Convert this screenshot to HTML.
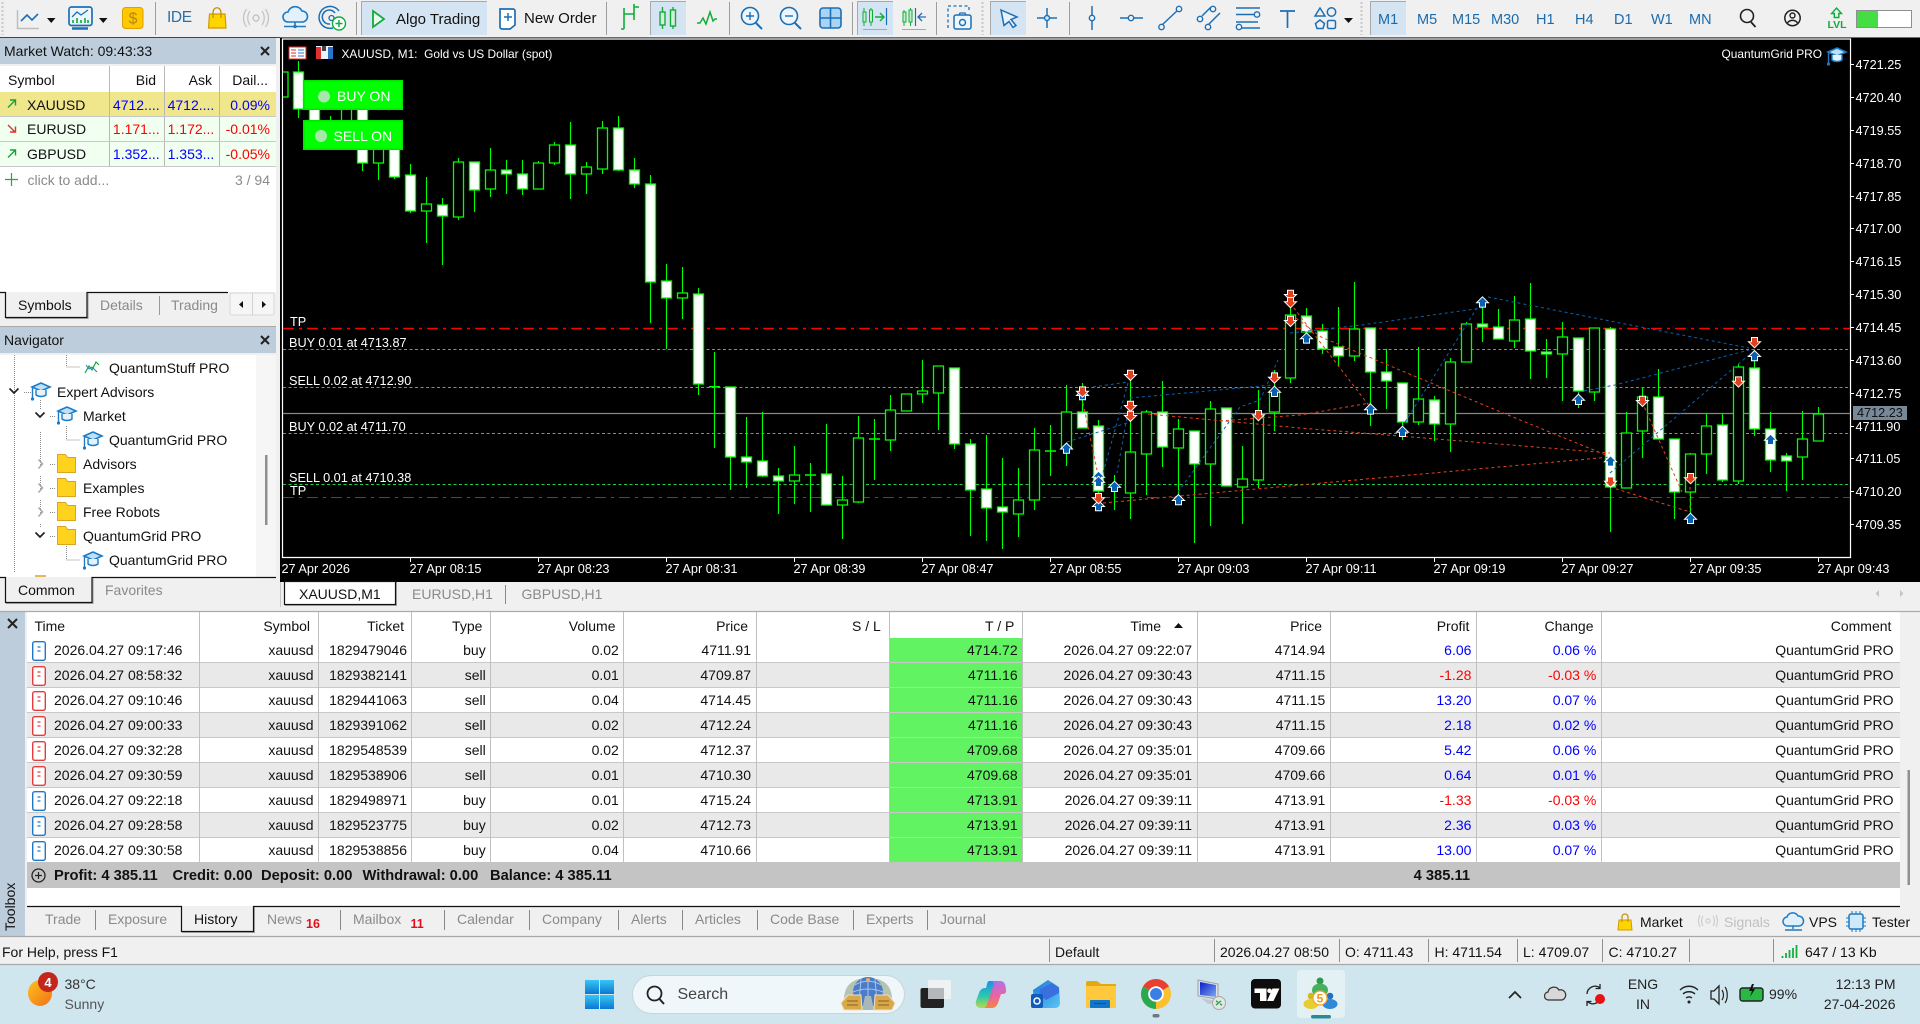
<!DOCTYPE html>
<html><head><meta charset="utf-8"><title>MetaTrader 5</title>
<style>
html,body{margin:0;padding:0;width:1920px;height:1024px;overflow:hidden;background:#f0f0f0}
body{position:relative;font-family:"Liberation Sans",sans-serif;font-size:14px;color:#111}
.b{position:absolute}
.t{position:absolute;height:20px;line-height:20px;white-space:nowrap}
.w{position:absolute;height:18px;line-height:18px;white-space:nowrap;font-size:12.7px;color:#fff}
.g{color:#8a8a8a}
.tb{font-size:15px}
.tf{color:#1a6bae;font-size:14.5px;top:10px}
.r{position:absolute;left:0;width:1920px;height:25px}
.r span{position:absolute;line-height:25px;height:25px;white-space:nowrap}
.c1{left:54px}.c2{right:1606.5px}.c3{right:1513px}.c4{right:1434.3px}.c5{right:1301.2px}.c6{right:1169px}.c7{right:902.4px}.c8{right:728px}.c9{right:594.7px}.c10{right:448.6px}.c11{right:323.7px}.c12{right:26.5px}
.bl{color:#0000ff}.rd{color:#ff0000}
.sm{font-weight:bold;font-size:14.7px;color:#111}
svg{position:absolute;left:0;top:0}
</style></head><body>
<!-- backgrounds -->
<div class="b" style="left:0;top:38px;width:276px;height:26px;background:#bdcddc"></div>
<div class="b" style="left:0;top:66px;width:276px;height:226px;background:#fff"></div>
<div class="b" style="left:0;top:92px;width:276px;height:24px;background:#f0e68c"></div>
<div class="b" style="left:0;top:117px;width:276px;height:49px;background:#f0fff0"></div>
<div class="b" style="left:0;top:327px;width:276px;height:26px;background:#bdcddc"></div>
<div class="b" style="left:0;top:355px;width:256px;height:222px;background:#fff"></div>
<div class="b" style="left:256px;top:355px;width:20px;height:222px;background:#f6f6f6"></div>
<div class="b" style="left:280px;top:38px;width:1640px;height:544px;background:#000"></div>
<div class="b" style="left:0;top:612px;width:25px;height:324px;background:#bdcddc"></div>
<div class="b" style="left:27px;top:612px;width:1873px;height:294px;background:#fff"></div>
<div class="b" style="left:0;top:965px;width:1920px;height:59px;background:#cfe6ee"></div>

<svg width="1920" height="1024" viewBox="0 0 1920 1024" fill="none">
<defs>
<polygon id="au" points="0,-5.5 6,0.5 3,0.5 3,4.8 -3,4.8 -3,0.5 -6,0.5" fill="#0860b0" stroke="#fff" stroke-width="1"/>
<polygon id="ad" points="0,5.5 6,-0.5 3,-0.5 3,-4.8 -3,-4.8 -3,-0.5 -6,-0.5" fill="#e04020" stroke="#fff" stroke-width="1"/>
<g id="hat"><path d="M1 6 10 2l9 4-9 4z" fill="#bfe0f7" stroke="#1c7cc8" stroke-width="1.6"/><path d="M5 9v5c3 2 7 2 10 0V9" stroke="#1c7cc8" stroke-width="1.4" fill="#e4f2fb"/><path d="M1.5 6.5V17" stroke="#1c7cc8" stroke-width="1.4"/><circle cx="1.5" cy="18" r="1.6" fill="#1c7cc8"/></g>
<path id="fld" d="M.5 3.5V.5h8l2 3h8v15H.5z" fill="#ffd21e" stroke="#d8a520"/>
<g id="ob"><rect x=".7" y=".7" width="12.6" height="18.6" rx="2" fill="#fff" stroke="#1e78c8" stroke-width="1.4"/><path d="M5.5 6h3M5.5 10h3" stroke="#1e78c8" stroke-width="1.2"/></g>
<g id="or"><rect x=".7" y=".7" width="12.6" height="18.6" rx="2" fill="#fff" stroke="#e63b3b" stroke-width="1.4"/><path d="M5.5 6h3M5.5 10h3" stroke="#e63b3b" stroke-width="1.2"/></g>
<linearGradient id="cl" x1="0" y1="0" x2="0" y2="1"><stop offset="0" stop-color="#1f8fe8"/><stop offset=".55" stop-color="#28c8b0"/><stop offset="1" stop-color="#b8d84a"/></linearGradient>
<linearGradient id="cr" x1="0" y1="0" x2="0" y2="1"><stop offset="0" stop-color="#b06ae8"/><stop offset=".55" stop-color="#ee5ca0"/><stop offset="1" stop-color="#f5803a"/></linearGradient>
<linearGradient id="og" x1="0" y1="0" x2="1" y2="1"><stop offset="0" stop-color="#1c78d8"/><stop offset="1" stop-color="#5cc4f4"/></linearGradient>
<linearGradient id="wg" x1="0" y1="0" x2="0" y2="1"><stop offset="0" stop-color="#38c6f4"/><stop offset="1" stop-color="#0a78d4"/></linearGradient>
<linearGradient id="sg" x1="0" y1="0" x2="1" y2="1"><stop offset="0" stop-color="#ffc21a"/><stop offset="1" stop-color="#f0701a"/></linearGradient>
<linearGradient id="ms" x1="0" y1="0" x2="1" y2="1"><stop offset="0" stop-color="#0a1ec8"/><stop offset="1" stop-color="#7fa8f0"/></linearGradient>
</defs>

<!-- Toolbar structure -->
<path d="M0 37.5H280" stroke="#9a9a9a"/>
<path d="M0 37.5H1920" stroke="#000" opacity=".55"/>
<path d="M155.5 2V35M356.5 2V35M606.5 2V35M729.5 2V35M852.5 2V35M936.5 2V35M1069.5 2V35" stroke="#9d9d9d"/>
<path d="M982.5 2V35M1361.5 2V35M2.5 2V35" stroke="#c8c8c8" stroke-dasharray="2 2" stroke-width="2"/>
<rect x="361" y="1" width="126" height="34" fill="#d5e4f2"/><path d="M361.5 35V1.5H487" stroke="#a8a8a8"/>
<rect x="650" y="1" width="36" height="34" fill="#d5e4f2"/><path d="M650.5 35V1.5H686" stroke="#a8a8a8"/>
<rect x="857" y="1" width="36" height="34" fill="#d5e4f2"/><path d="M857.5 35V1.5H893" stroke="#a8a8a8"/>
<rect x="990" y="1" width="36" height="34" fill="#d5e4f2"/><path d="M990.5 35V1.5H1026" stroke="#a8a8a8"/>
<rect x="1370" y="1" width="36" height="34" fill="#d5e4f2"/><path d="M1370.5 35V1.5H1406" stroke="#a8a8a8"/>

<!-- Toolbar icons -->
<path d="M17.5 10V28.500H39" stroke="#bdbdbd" stroke-width="1.5"/><path d="M21 21 27 15 32 20 38 14" stroke="#1d6fb5" stroke-width="1.6"/>
<path d="M47 18h8.500l-4.250 5zM99 18h8.500l-4.250 5z" fill="#111"/>
<rect x="69" y="7" width="23" height="18.500" rx="2.500" stroke="#1d6fb5" stroke-width="1.7" fill="#edf6fc"/><path d="M72 28.500h16" stroke="#1d6fb5" stroke-width="2.500"/><path d="M72 17 77 12 81 15 88 10" stroke="#1d6fb5" stroke-width="1.3"/><path d="M73 23v-3M77 23v-5M81 23v-3M85 23v-5M88 23v-3" stroke="#10a83a" stroke-width="1.600"/>
<rect x="122.500" y="7.500" width="20.500" height="21" rx="3" fill="#ffc800" stroke="#e0a000"/>
<text x="133" y="23.500" font-family="Liberation Sans" font-size="16" fill="#b8860b" text-anchor="middle">$</text>
<path d="M209.500 14h15.500l1 14h-17.500z" fill="#ffd500" stroke="#d09a00" stroke-width="1.200"/><path d="M213 18v-5c0-7 8-7 8 0v5" stroke="#c78f00" stroke-width="1.300"/>
<circle cx="256" cy="18" r="3" stroke="#c4c4c4" stroke-width="1.400"/><path d="M250 11c-3 4-3 10 0 14M262 11c3 4 3 10 0 14M246.500 9c-4 6-4 12 0 18M265.500 9c4 6 4 12 0 18" stroke="#c4c4c4" stroke-width="1.300"/>
<path d="M288 22a5 5 0 0 1 0-10 7.500 7.500 0 0 1 14-1 5.500 5.500 0 0 1 0 11z" fill="#e3f1fb" stroke="#1d7ac4" stroke-width="1.600"/><path d="M295 22v4M284 26.500h22" stroke="#1d7ac4" stroke-width="1.600"/><circle cx="295" cy="26.500" r="1.800" fill="#1d7ac4"/>
<path d="M339 11a11 11 0 1 0-6 17M335 13a7 7 0 1 0-5 11" stroke="#1d6fb5" stroke-width="1.500"/><circle cx="331.500" cy="18" r="2.500" stroke="#1d6fb5" stroke-width="1.300"/><circle cx="339" cy="23.500" r="6.500" fill="#fff" stroke="#0dae40" stroke-width="1.400"/><path d="M339 20v7M335.500 23.500h7" stroke="#0dae40" stroke-width="1.500"/>
<path d="M373 11v16l11-8z" stroke="#12ab3c" stroke-width="1.800" fill="#eafaef"/>
<path d="M500 9h13a2 2 0 0 1 2 2v14l-5 4h-8a2 2 0 0 1-2-2z" fill="#fff" stroke="#1d6fb5" stroke-width="1.700"/><path d="M508 13v8M504 17h8" stroke="#1d6fb5" stroke-width="1.500"/>
<path d="M624 8v21M621 29h3M624 14h5M634 4v16M634 7h5M634 14h-5" stroke="#11ad3a" stroke-width="1.600"/>
<path d="M662.500 7v22M673 7v22" stroke="#11ad3a" stroke-width="1.400"/><rect x="660" y="12" width="5" height="13" fill="#d5f0dc" stroke="#11ad3a" stroke-width="1.400"/><rect x="670.500" y="10" width="5" height="16" fill="#d5f0dc" stroke="#11ad3a" stroke-width="1.400"/>
<path d="M697 23h3l3-5 3 6 4-12 3 9 2-2h2" stroke="#11ad3a" stroke-width="1.500"/>
<circle cx="750" cy="16" r="8.500" stroke="#1d6fb5" stroke-width="1.600" fill="#edf6fc"/><path d="M756 23l6 6" stroke="#1d6fb5" stroke-width="2"/><path d="M750 12v8M746 16h8" stroke="#1d6fb5" stroke-width="1.400"/>
<circle cx="789" cy="16" r="8.500" stroke="#1d6fb5" stroke-width="1.600" fill="#edf6fc"/><path d="M795 23l6 6" stroke="#1d6fb5" stroke-width="2"/><path d="M785 16h8" stroke="#1d6fb5" stroke-width="1.400"/>
<rect x="820" y="8" width="21" height="20" rx="3" fill="#a9d4f5" stroke="#1d6fb5" stroke-width="1.600"/><path d="M830.500 8v20M820 18h21" stroke="#1d6fb5" stroke-width="1.600"/>
<path d="M864 8v18M871 8v18" stroke="#11ad3a"/><rect x="863" y="12" width="3" height="10" fill="#c3eecd" stroke="#11ad3a"/><rect x="869.500" y="10" width="3" height="12" fill="#c3eecd" stroke="#11ad3a"/><path d="M875 17h8M880 13l4 4-4 4" stroke="#11ad3a" stroke-width="1.400"/><path d="M886.500 8v17" stroke="#1d6fb5" stroke-width="1.200"/><path d="M863 29.500h24" stroke="#a8a8a8"/>
<path d="M904 10v16M910.500 8v18" stroke="#11ad3a"/><rect x="903" y="12" width="3" height="10" fill="#c3eecd" stroke="#11ad3a"/><rect x="909" y="10" width="3" height="12" fill="#c3eecd" stroke="#11ad3a"/><path d="M915.500 8v18" stroke="#1d6fb5" stroke-width="1.200"/><path d="M926 17h-8M922 13l-4 4 4 4" stroke="#1d6fb5" stroke-width="1.300"/><path d="M902 29.500h24" stroke="#a8a8a8"/>
<path d="M948 28v-22h21v6" stroke="#1d6fb5" stroke-dasharray="3 2.500" stroke-width="1.300"/><rect x="954" y="15" width="17" height="14" rx="2" fill="#edf6fc" stroke="#1d6fb5" stroke-width="1.500"/><circle cx="962.500" cy="22.500" r="3" stroke="#1d6fb5" stroke-width="1.400"/><path d="M959 15l1-2h5l1 2" stroke="#1d6fb5" stroke-width="1.300"/>
<path d="M1001 10l16 7-6 2.500 5 6-3 2-4-6-5 4z" fill="#e8f2fa" stroke="#1d6fb5" stroke-width="1.500"/>
<path d="M1047 8v20M1037 18h20" stroke="#1d6fb5" stroke-width="1.500"/><circle cx="1047" cy="18" r="2.500" fill="#d7e8f6" stroke="#1d6fb5" stroke-width="1.400"/>
<path d="M1092 6v24" stroke="#1d6fb5" stroke-width="1.500"/><circle cx="1092" cy="18" r="2.700" fill="#f0f0f0" stroke="#1d6fb5" stroke-width="1.400"/>
<path d="M1120 18h23" stroke="#1d6fb5" stroke-width="1.500"/><circle cx="1131" cy="18" r="2.700" fill="#f0f0f0" stroke="#1d6fb5" stroke-width="1.400"/>
<path d="M1162 25l17-16" stroke="#1d6fb5" stroke-width="1.500"/><circle cx="1161.500" cy="27" r="2.700" fill="#f0f0f0" stroke="#1d6fb5" stroke-width="1.400"/><circle cx="1179" cy="9" r="2.700" fill="#f0f0f0" stroke="#1d6fb5" stroke-width="1.400"/>
<path d="M1202 16l9-9M1208 25l12-12" stroke="#1d6fb5" stroke-width="1.500"/><circle cx="1200" cy="19" r="2.700" fill="#f0f0f0" stroke="#1d6fb5" stroke-width="1.400"/><circle cx="1213" cy="9" r="2.700" fill="#f0f0f0" stroke="#1d6fb5" stroke-width="1.400"/><circle cx="1208" cy="27" r="2.700" fill="#f0f0f0" stroke="#1d6fb5" stroke-width="1.400"/>
<path d="M1236 8h24M1236 14.500h18M1236 22h22M1240 28h20" stroke="#1d6fb5" stroke-width="1.500"/><circle cx="1257" cy="14.500" r="2.700" fill="#f0f0f0" stroke="#1d6fb5" stroke-width="1.400"/><circle cx="1239" cy="27" r="2.700" fill="#f0f0f0" stroke="#1d6fb5" stroke-width="1.400"/>
<path d="M1280 11h15M1287.500 11v17" stroke="#1d6fb5" stroke-width="1.700"/>
<path d="M1320 8l5 8h-10z" stroke="#1d6fb5" stroke-width="1.500"/><circle cx="1331.500" cy="12" r="4.200" stroke="#1d6fb5" stroke-width="1.500"/><path d="M1320 20l4.500 3.500-1.500 5h-6l-1.500-5z" stroke="#1d6fb5" stroke-width="1.500"/><rect x="1327.500" y="20.500" width="8" height="8" rx="1.500" stroke="#1d6fb5" stroke-width="1.500"/>
<path d="M1344 18h9l-4.500 5z" fill="#111"/>
<circle cx="1747" cy="16" r="6.500" stroke="#222" stroke-width="1.600"/><path d="M1751 22l4.500 5" stroke="#222" stroke-width="1.800"/>
<circle cx="1792.500" cy="18" r="7.700" stroke="#222" stroke-width="1.500"/><circle cx="1792.500" cy="15.500" r="2.500" stroke="#222" stroke-width="1.400"/><path d="M1787.500 23c2-3.500 8-3.500 10 0" stroke="#222" stroke-width="1.400"/>
<path d="M1836.500 8l5 5.500h-2.700v4h-4.500v-4h-2.700z" stroke="#11ad3a" stroke-width="1.400"/>
<text x="1837" y="28" font-family="Liberation Sans" font-size="10.500" font-weight="bold" fill="#11ad3a" text-anchor="middle">LVL</text>
<rect x="1856.500" y="10.500" width="55" height="17" fill="#fff" stroke="#8f8f8f"/><rect x="1857" y="11" width="21" height="16" fill="#44dd44"/>

<!-- Chart frame -->
<path d="M282 39H1850.500V557.500H282.500V39" stroke="#fff" stroke-width="1.200"/>
<path d="M1850 64.500h4M1850 97.500h4M1850 130.500h4M1850 163.500h4M1850 196.500h4M1850 228.500h4M1850 261.500h4M1850 294.500h4M1850 327.500h4M1850 360.500h4M1850 393.500h4M1850 426.500h4M1850 458.500h4M1850 491.500h4M1850 524.500h4" stroke="#fff"/>
<path d="M410.500 557v5M538.500 557v5M666.500 557v5M794.500 557v5M922.500 557v5M1050.500 557v5M1178.500 557v5M1306.500 557v5M1434.500 557v5M1562.500 557v5M1690.500 557v5M1818.500 557v5" stroke="#fff"/>

<!-- Horizontal levels -->
<path d="M283 413.500H1850" stroke="#868686" stroke-width="1.200"/>
<path d="M283 349.500H1850M283 387.500H1850M283 433.500H1850M283 484.500H1850" stroke="#22cc44" stroke-dasharray="3 2.500"/>
<path d="M283 328.500H1850" stroke="#f00" stroke-width="1.600" stroke-dasharray="11 5 3 5"/>
<path d="M283 497.500H1850" stroke="#f00" stroke-width="1.100" stroke-dasharray="11 5 3 5"/>

<!-- Wicks -->
<path stroke="#00ff00" stroke-width="1.100" d="M298.500 61V118M314.500 95V135M330.500 116V135M346.500 100V135M362.500 100V171M378.500 135V180M394.500 140V179M410.500 164V213M426.500 177V243M442.500 198V265M458.500 158V220M474.500 162V212M490.500 148V197M506.500 160V194M522.500 160V195M538.500 161V189M554.500 142V165M570.500 122V199M586.500 162V194M602.500 121V174M618.500 116V171M634.500 158V188M650.500 175V323M666.500 264V349M682.500 267V319M698.500 288V395M714.500 352V448M730.500 387V490M746.500 417V488M762.500 412V477M778.500 468V514M794.500 446V504M810.500 463V512M826.500 424V505M842.500 476V539M858.500 416V503M874.500 419V480M890.500 395V451M922.500 360V403M938.500 366V430M954.500 368V449M970.500 439V536M986.500 435V541M1002.500 458V549M1018.500 468V537M1034.500 428V510M1050.500 425V476M1066.500 385V466M1082.500 383V428M1098.500 420V510M1114.500 475V510M1130.500 380V519M1146.500 410V495M1162.500 381V467M1178.500 419V500M1194.500 431V543M1210.500 401V526M1242.500 446V524M1258.500 390V488M1274.500 370V431M1290.500 308V383M1306.500 308V340M1322.500 324V354M1338.500 307V366M1354.500 282V361M1370.500 328V426M1386.500 349V409M1402.500 383V440M1418.500 347V425M1434.500 396V441M1450.500 358V452M1466.500 322V362M1482.500 297V342M1498.500 309V339M1514.500 296V348M1530.500 283V379M1546.500 339V378M1562.500 322V401M1578.500 338V408M1594.500 328V401M1610.500 327V532M1626.500 412V488M1642.500 388V458M1658.500 369V439M1674.500 439V519M1690.500 453V515M1706.500 414V474M1722.500 414V482M1738.500 364V484M1754.500 360V436M1770.500 412V472M1786.500 453V491M1802.500 411V480M1818.500 407V441"/>
<path stroke="#00ff00" stroke-width="1.500" d="M709 386.700h11M805 475h11M869 439h11M1045 451h11"/>
<!-- Hollow bodies -->
<path fill="#000" stroke="#00ff00" stroke-width="1.300" d="M283 72h5V97h-5M341.500 105h10V130h-10zM373.500 140h10V163h-10zM421.500 204h10V211h-10zM453.500 162h10V217h-10zM485.500 170h10V189h-10zM533.500 163h10V189h-10zM549.500 145h10V163h-10zM581.500 167h10V174h-10zM597.500 128h10V169h-10zM677.500 293h10V298h-10zM789.500 475h10V481h-10zM837.500 500h10V505h-10zM853.500 438h10V502h-10zM885.500 410h10V440h-10zM901.500 394h10V411h-10zM917.500 391h10V394h-10zM933.500 366h10V393h-10zM1013.500 500h10V514h-10zM1029.500 450h10V500h-10zM1061.500 412h10V448h-10zM1125.500 452h10V493h-10zM1141.500 412h10V454h-10zM1173.500 429h10V448h-10zM1205.500 409h10V464h-10zM1237.500 479h10V487h-10zM1253.500 416h10V480h-10zM1269.500 392h10V412h-10zM1285.500 315h10V378h-10zM1349.500 329h10V356h-10zM1413.500 399h10V422h-10zM1445.500 362h10V424h-10zM1461.500 324h10V362h-10zM1509.500 320h10V341h-10zM1557.500 337h10V354h-10zM1589.500 328h10V392h-10zM1621.500 433h10V488h-10zM1637.500 397h10V431h-10zM1685.500 454h10V492h-10zM1701.500 426h10V454h-10zM1733.500 367h10V481h-10zM1797.500 439h10V457h-10zM1813.500 414h10V441h-10z"/>
<!-- White bodies -->
<path fill="#fff" stroke="#00ff00" stroke-width="1.300" d="M293.500 72h10V109h-10zM309.500 100h10V130h-10zM357.500 100h10V163h-10zM389.500 140h10V177h-10zM405.500 175h10V211h-10zM437.500 205h10V216h-10zM469.500 162h10V190h-10zM501.500 170h10V174h-10zM517.500 174h10V189h-10zM565.500 145h10V174h-10zM613.500 128h10V170h-10zM629.500 170h10V184h-10zM645.500 184h10V282h-10zM661.500 281h10V298h-10zM693.500 294h10V384h-10zM725.500 387h10V457h-10zM741.500 457h10V462h-10zM757.500 461h10V476h-10zM773.500 476h10V481h-10zM821.500 474h10V505h-10zM949.500 368h10V444h-10zM965.500 444h10V490h-10zM981.500 489h10V508h-10zM997.500 507h10V512h-10zM1077.500 412h10V428h-10zM1093.500 426h10V491h-10zM1157.500 412h10V447h-10zM1189.500 431h10V464h-10zM1221.500 408h10V486h-10zM1301.500 316h10V332h-10zM1317.500 331h10V349h-10zM1333.500 347h10V356h-10zM1365.500 328h10V372h-10zM1381.500 372h10V381h-10zM1397.500 383h10V422h-10zM1429.500 400h10V424h-10zM1477.500 324h10V327h-10zM1493.500 327h10V339h-10zM1525.500 319h10V351h-10zM1541.500 352h10V354h-10zM1573.500 338h10V391h-10zM1605.500 329h10V487h-10zM1653.500 397h10V439h-10zM1669.500 439h10V492h-10zM1717.500 425h10V480h-10zM1749.500 368h10V429h-10zM1765.500 429h10V460h-10zM1781.500 456h10V461h-10z"/>

<!-- Trade lines -->
<path stroke="#0860b0" stroke-dasharray="3 3" d="M1093 387 1128 382M1128 383 1103 473M1130 400 1117 473M1067 442 1130 422M1130 398 1240 388 1273 385M1178 492 1240 407 1260 400 1278 360M1290 333 1361.600 325 1482 308M1402 427 1482 300M1488 297 1615 322 1749 348M1578 392 1615 385 1749 350M1610 473 1749 355"/>
<path stroke="#e8401c" stroke-dasharray="3 3" d="M1083 403 1097 470M1148 414 1300 428 1610 453M1103 503 1300 485 1610 457M1220 421 1300 415 1370 403M1290 303 1370 407M1296 318 1321 337 1419 378 1508 415 1606 455M1610 487 1690 512M1642 402 1682 492M1690 487V512"/>

<!-- Signal arrows -->
<g>
<use href="#au" x="1066.500" y="448.500"/><use href="#au" x="1082.500" y="395"/><use href="#au" x="1098.500" y="476.700"/><use href="#au" x="1098.500" y="481.700"/><use href="#au" x="1098.500" y="506"/><use href="#au" x="1114.500" y="486.700"/><use href="#au" x="1178.500" y="500"/><use href="#au" x="1274.500" y="391.700"/><use href="#au" x="1306.500" y="338.300"/><use href="#au" x="1370.500" y="409.300"/><use href="#au" x="1402.500" y="431.700"/><use href="#au" x="1482.500" y="302.300"/><use href="#au" x="1578.500" y="399.700"/><use href="#au" x="1610.500" y="461.300"/><use href="#au" x="1690.500" y="518.700"/><use href="#au" x="1754.500" y="356"/><use href="#au" x="1770.500" y="439.700"/>
<use href="#ad" x="1082.500" y="391.700"/><use href="#ad" x="1130.500" y="375"/><use href="#ad" x="1130.500" y="406"/><use href="#ad" x="1130.500" y="416"/><use href="#ad" x="1098.500" y="498.300"/><use href="#ad" x="1258.500" y="415.300"/><use href="#ad" x="1274.500" y="377.700"/><use href="#ad" x="1290.500" y="295"/><use href="#ad" x="1290.500" y="302.300"/><use href="#ad" x="1290.500" y="321"/><use href="#ad" x="1610.500" y="481.700"/><use href="#ad" x="1642.500" y="401"/><use href="#ad" x="1690.500" y="478.300"/><use href="#ad" x="1738.500" y="381.700"/><use href="#ad" x="1754.500" y="342.300"/>
</g>

<!-- Chart buttons -->
<rect x="303" y="80" width="100" height="30" fill="#00f000"/><rect x="304" y="81" width="98" height="28" fill="#00ff00" stroke="#00e000"/>
<rect x="303" y="120" width="100" height="30" fill="#00f000"/><rect x="304" y="121" width="98" height="28" fill="#00ff00" stroke="#00e000"/>
<circle cx="324" cy="96.500" r="6" fill="#a9e6a9"/><circle cx="321" cy="136" r="6" fill="#a9e6a9"/>
<!-- chart title icons -->
<rect x="289" y="47" width="17" height="12" fill="#fff" stroke="#d83030"/><path d="M291 50h5M291 53h5M291 56h5" stroke="#d83030"/><path d="M298 50h6M298 53h6M298 56h6" stroke="#2a74c8"/>
<rect x="316" y="46" width="17" height="13" fill="#e9f3fb"/><rect x="316" y="47" width="5" height="12" fill="#e03030"/><rect x="328" y="47" width="5" height="12" fill="#2a74c8"/><rect x="322" y="46" width="4" height="5" fill="#444"/>
<use href="#hat" x="1827" y="46"/>
<rect x="1853" y="406" width="54" height="14" fill="#778899"/>

<!-- MW structure -->
<path d="M109.500 66V166M164.500 66V166M219.500 66V166" stroke="#b8b8b8"/>
<path d="M0 116.500H276M0 141.500H276M0 166.500H276" stroke="#c8c8c8"/>
<path d="M8 107.500 15 100.500M10 100h5.500V105.500" stroke="#16a03a" stroke-width="1.400"/>
<path d="M8 125 15 132M10 132h5.500V126.500" stroke="#e23030" stroke-width="1.400"/>
<path d="M8 157.500 15 150.500M10 150h5.500V155.500" stroke="#16a03a" stroke-width="1.400"/>
<path d="M5 179.500h13M11.500 173v13" stroke="#22a83e" stroke-width="1.200"/>
<path d="M261 47l8 8M269 47l-8 8M261 336l8 8M269 336l-8 8" stroke="#222" stroke-width="2"/>
<!-- MW tabs -->
<path d="M0 292.500H5.500V317.500H87V292.500H228" stroke="#111" stroke-width="1.200"/>
<path d="M6 318.500H88V293" stroke="#999"/>
<path d="M159.500 296V315" stroke="#999"/>
<rect x="230" y="293" width="44" height="22" rx="2" fill="#f6f6f6" stroke="#d8d8d8"/><path d="M252.500 293v22" stroke="#d0d0d0"/><path d="M243 301v7l-4-3.500zM262 301v7l4-3.500z" fill="#111"/>
<path d="M0 326.500H276" stroke="#a8a8a8"/>
<path d="M280.500 582V607" stroke="#c8c8c8"/>
<!-- Navigator tree -->
<path d="M14.500 355V572M40.500 432V466M40.500 476V490M40.500 500V514M40.500 524V528M66.500 355V367H80M40.500 400V410M66.500 426V440H80M66.500 546V560H80M24 392.500H31M50 416.500H56M50 464.500H56M50 488.500H56M50 512.500H56M50 536.500H56" stroke="#8a8a8a" stroke-dasharray="1 1"/>
<path d="M9.500 388.500l4.500 4.500 4.500-4.500M35.500 412.500l4.500 4.500 4.500-4.500M35.500 532.500l4.500 4.500 4.500-4.500" stroke="#222" stroke-width="1.700"/>
<path d="M38.500 459.500l4 4.500-4 4.500M38.500 483.500l4 4.500-4 4.500M38.500 507.500l4 4.500-4 4.500" stroke="#aaa" stroke-width="1.600"/>
<path d="M85 373l4-7 3 4 4-8 3 3" stroke="#13a83c" stroke-width="1.200"/><path d="M86 365l3 4 3-2 5 5" stroke="#1c7cc8" stroke-width="1"/>
<use href="#hat" x="31" y="381"/><use href="#hat" x="57" y="405"/><use href="#hat" x="83" y="430"/><use href="#hat" x="83" y="550"/>
<use href="#fld" x="57" y="454"/><use href="#fld" x="57" y="478"/><use href="#fld" x="57" y="502"/><use href="#fld" x="57" y="526"/>
<path d="M35 576h11" stroke="#e0a020" stroke-width="1.500"/>
<rect x="265" y="455" width="2.500" height="70" fill="#909090"/>
<!-- Common tab -->
<path d="M0 577.500H5.500V602.500H92V577.500H276" stroke="#111" stroke-width="1.200"/><path d="M6 603.500H93V578" stroke="#999"/>
<!-- Chart tabs -->
<rect x="284.500" y="581.500" width="111" height="23" fill="#fff" stroke="#111" stroke-width="1.200"/><path d="M285 605.500H396.500V582" stroke="#999"/>
<path d="M505.500 585V604" stroke="#888"/>
<path d="M1879 590v7l-3.500-3.500zM1900 590v7l3.500-3.500z" fill="#c4c4c4"/>

<!-- Toolbox table -->
<path d="M0 611.500H1920" stroke="#aaa" stroke-width="1.200"/>
<rect x="27" y="663" width="1873" height="24" fill="#e9e9e9"/><rect x="27" y="713" width="1873" height="24" fill="#e9e9e9"/><rect x="27" y="763" width="1873" height="24" fill="#e9e9e9"/><rect x="27" y="813" width="1873" height="24" fill="#e9e9e9"/>
<rect x="890" y="638" width="132" height="224" fill="#62f362"/>
<path d="M27 662.500H1900M27 687.500H1900M27 712.500H1900M27 737.500H1900M27 762.500H1900M27 787.500H1900M27 812.500H1900M27 837.500H1900" stroke="#c8c8c8"/>
<path d="M199.500 612V862M318.500 612V862M411.500 612V862M490.500 612V862M623.500 612V862M756.500 612V862M889.500 612V862M1022.500 612V862M1197.500 612V862M1330.500 612V862M1476.500 612V862M1601.500 612V862" stroke="#c0c0c0"/>
<rect x="27" y="862" width="1873" height="26" fill="#c4c4c4"/>
<path d="M8 619l9 9M17 619l-9 9" stroke="#222" stroke-width="2"/>
<path d="M1174 628l4.500-5 4.500 5z" fill="#111"/>
<use href="#ob" x="32" y="641"/><use href="#or" x="32" y="666"/><use href="#or" x="32" y="691"/><use href="#or" x="32" y="716"/><use href="#or" x="32" y="741"/><use href="#or" x="32" y="766"/><use href="#ob" x="32" y="791"/><use href="#ob" x="32" y="816"/><use href="#ob" x="32" y="841"/>
<circle cx="38.500" cy="875.500" r="6.500" stroke="#222" stroke-width="1.300"/><path d="M38.500 872v7M35 875.500h7" stroke="#222" stroke-width="1.200"/>
<rect x="1907.500" y="770" width="2.500" height="115" fill="#909090"/>
<path d="M27 906.500H181.500V931.500H253.500V906.500H1900" stroke="#111" stroke-width="1.200"/><path d="M182 932.500H254.500V907" stroke="#999"/>
<path d="M95.500 910V930M340.500 910V930M444.500 910V930M529.500 910V930M618.500 910V930M682.500 910V930M757.500 910V930M853.500 910V930M927.500 910V930" stroke="#888"/>
<!-- right mini toolbar -->
<path d="M1619 920h12l1 10h-14z" fill="#ffd500" stroke="#d09a00"/><path d="M1622 922v-5c0-4 6-4 6 0v5" stroke="#c78f00" stroke-width="1.200"/>
<circle cx="1708" cy="921" r="2" stroke="#c8c8c8"/><path d="M1703 916c-2 3-2 7 0 10M1713 916c2 3 2 7 0 10M1700 915c-2 4-2 8 0 12M1716 915c2 4 2 8 0 12" stroke="#c8c8c8"/>
<path d="M1788 926a4.500 4.500 0 0 1-1-9 6 6 0 0 1 11-1 5 5 0 0 1 1 10z" fill="#dff0fb" stroke="#1d7ac4" stroke-width="1.500"/><path d="M1793 926v3M1785 930h17" stroke="#1d7ac4" stroke-width="1.400"/>
<rect x="1849" y="914" width="14" height="15" rx="2" fill="#cfe8fa" stroke="#1d7ac4" stroke-width="1.500"/><path d="M1852 911v3M1856 911v3M1860 911v3M1852 929v3M1856 929v3M1860 929v3M1846 918h3M1846 922h3M1846 926h3M1863 918h3M1863 922h3M1863 926h3" stroke="#1d7ac4"/>
<!-- Status bar -->
<path d="M0 936.500H1920M0 964.500H1920" stroke="#a8a8a8" stroke-width="1.200"/>
<path d="M1049.500 939V962M1214.500 939V962M1339.500 939V962M1428.500 939V962M1517.500 939V962M1602.500 939V962M1689.500 939V962M1773.500 939V962" stroke="#909090"/>
<path d="M1782.500 958v-2M1786 958v-5M1789.500 958v-8M1793 958v-10M1796.500 958v-13" stroke="#12b03c" stroke-width="1.800"/>

<!-- Taskbar -->
<ellipse cx="40" cy="993" rx="12" ry="13" fill="url(#sg)"/><circle cx="48" cy="982" r="10" fill="#c3271c"/>
<text x="48" y="987" font-family="Liberation Sans" font-size="13" font-weight="bold" fill="#fff" text-anchor="middle">4</text>
<rect x="585" y="980" width="14" height="14" fill="url(#wg)"/><rect x="600" y="980" width="14" height="14" fill="url(#wg)"/><rect x="585" y="995" width="14" height="14" fill="url(#wg)"/><rect x="600" y="995" width="14" height="14" fill="url(#wg)"/>
<rect x="632.500" y="975.500" width="272" height="38" rx="19" fill="#eff7fa" stroke="#c9d4d8"/>
<circle cx="654.500" cy="993.500" r="7" stroke="#222" stroke-width="1.800"/><path d="M659.500 999l4.500 5" stroke="#222" stroke-width="2"/>
<!-- search highlight -->
<path d="M845 1008c-3-14 0-30 23-30s26 16 23 30z" fill="#b4c4b0"/>
<circle cx="868" cy="992" r="15" fill="#4a7cc8"/><path d="M855 985c8-5 18-5 26 0M853 992c10-4 20-4 30 0M861 979l-2 24M875 979l2 24M868 978v26" stroke="#a8c4ec" stroke-width="1"/><circle cx="868" cy="980" r="2" fill="#e8b060"/>
<path d="M862 1010l3-14h6l3 14z" fill="#a8b8b8"/>
<path d="M841 1003l7-8h13l1 15h-18z" fill="#d9a84a" stroke="#f0e0c0"/><path d="M895 1003l-7-8h-13l-1 15h18z" fill="#d9a84a" stroke="#f0e0c0"/><path d="M847 1001h11M847 1005h11M878 1001h11M878 1005h11" stroke="#8a6020"/>
<!-- task view -->
<rect x="928" y="980" width="23" height="19" rx="2" fill="#eef2f3"/><rect x="920.500" y="988" width="23.500" height="20" rx="2" fill="#222"/><rect x="928" y="988" width="16" height="11" fill="#b4b8ba"/>
<!-- copilot -->
<path d="M989 981h6c1.500 0 1.500 1.500 1 3l-6 19c-.8 3-3 5-6 5h-3c-4 0-6-3-5-7l3-8c1-3 3-5 6-5h1l1-4c.5-2 1-3 2-3z" fill="url(#cl)"/>
<path d="M993 981h7c3 0 5 2 5.500 5l.5 4c.5 2-.5 4-3 4h-2l-3 9c-1 3-3 5-6 5h-9c2 0 3-1 4-3l6-19c.5-2 0-4-.5-5z" fill="url(#cr)" opacity=".95"/>
<!-- outlook -->
<path d="M1033 990l15-10 11 7 1 16c0 3-2 5-5 5h-16c-3 0-5-2-5-5z" fill="url(#og)"/><path d="M1040 989l12-6 7 5v5l-13 7-7-5z" fill="#3a6fe0"/>
<rect x="1031" y="994" width="12" height="14" rx="2" fill="#0f5cbc"/><circle cx="1037" cy="1001" r="3" stroke="#fff" stroke-width="1.500"/>
<!-- folder -->
<path d="M1086 983a2 2 0 0 1 2-2h9l4 3h15v24h-30z" fill="#e4a810"/><rect x="1086" y="986" width="30" height="22" fill="#ffc83d"/><rect x="1090" y="1000" width="20" height="8" rx="1" fill="#1176c9"/><path d="M1094 1003.500h12" stroke="#0a4f90"/>
<!-- chrome -->
<path d="M1156 994L1143 986.500A15 15 0 0 1 1169 986.500z" fill="#e8402f"/><path d="M1156 994L1169 986.500A15 15 0 0 1 1156 1009z" fill="#fbc02d"/><path d="M1156 994L1156 1009A15 15 0 0 1 1143 986.500z" fill="#2ea84f"/><circle cx="1156" cy="994" r="7.800" fill="#fff"/><circle cx="1156" cy="994" r="6" fill="#3a7fe8"/>
<rect x="1152.500" y="1014" width="7" height="3.500" rx="1.700" fill="#6a7a80"/>
<!-- remote monitor -->
<path d="M1198 980l20 4v15l-20-3z" fill="#dfe3e6" stroke="#9aa0a4"/><path d="M1200 982l16 3v12l-16-2z" fill="url(#ms)"/><path d="M1201 998l14 3 3 3-10 0z" fill="#c4c8ca"/><circle cx="1219" cy="1003" r="6.500" fill="#e2e6e4" stroke="#a8a8a8"/><path d="M1216 1005l5-4M1216 1001l2 1M1220 1004l2 1" stroke="#18a040" stroke-width="1.300"/>
<!-- tradingview -->
<rect x="1251" y="979" width="30" height="29.500" rx="4" fill="#0d0d0d"/><path d="M1254.500 988.500h12v12.500h-6.500v-8h-5.500z" fill="#fff"/><circle cx="1269.500" cy="990.800" r="2.300" fill="#fff"/><path d="M1272.500 988.500h7l-6 12.500h-6.500z" fill="#fff"/>
<!-- MT5 -->
<rect x="1297" y="970" width="48" height="48" rx="4" fill="#e4f1f4"/><rect x="1311" y="1015" width="20" height="3.500" rx="1.700" fill="#2b8a94"/>
<circle cx="1320" cy="981" r="3.500" fill="#2f9a50"/><ellipse cx="1320" cy="990" rx="8" ry="6.500" fill="#46b060"/>
<circle cx="1311" cy="996" r="3.300" fill="#d4b820"/><ellipse cx="1311" cy="1004" rx="7.500" ry="5" fill="#e8cc30"/>
<circle cx="1330" cy="996" r="3.300" fill="#2470c0"/><ellipse cx="1330" cy="1004" rx="7.500" ry="5" fill="#3088d8"/>
<circle cx="1320" cy="998" r="7" fill="#fff" stroke="#f0a828" stroke-width="1.200"/>
<text x="1320" y="1002.500" font-family="Liberation Sans" font-size="12" font-weight="bold" fill="#e89a18" text-anchor="middle">5</text>
<path d="M1509 998l6-6 6 6" stroke="#222" stroke-width="1.700"/>
<path d="M1549 1000a4 4 0 0 1-1-8 6 6 0 0 1 11-2 5 5 0 0 1 3 10z" fill="#d8d8d8" stroke="#333" stroke-width="1.200"/>
<path d="M1587 994a8 8 0 0 1 13-6M1601 996a8 8 0 0 1-13 6M1600 984v4.500h-4.500M1587 1006v-4.500h4.500" stroke="#222" stroke-width="1.300"/><circle cx="1600" cy="999" r="5" fill="#e81010"/>
<path d="M1680 990c5-5 13-5 18 0M1683 994c3-3 9-3 12 0M1686 998c2-1.500 4-1.500 6 0" stroke="#222" stroke-width="1.400"/><circle cx="1689" cy="1002" r="1.500" fill="#222"/>
<path d="M1711 991h3l5-5v18l-5-5h-3z" stroke="#222" stroke-width="1.300"/><path d="M1722 990c2 3 2 7 0 10M1725 987c3 4 3 12 0 16" stroke="#222" stroke-width="1.200"/>
<rect x="1740" y="988" width="23" height="13" rx="2.500" fill="#28b844" stroke="#222" stroke-width="1.400"/><path d="M1752 984l-3 7h3l-2 6 5-8h-3l2-5z" fill="#111"/>
</svg>

<!-- Toolbar text -->
<div class="t" style="left:167px;top:8px;color:#2a6fa8;font-size:15.500px;letter-spacing:-.4px">IDE</div>
<div class="t tb" style="left:396px;top:10px">Algo Trading</div>
<div class="t tb" style="left:524px;top:9px">New Order</div>
<div class="t tf" style="left:1378px">M1</div>
<div class="t tf" style="left:1417px">M5</div>
<div class="t tf" style="left:1452px">M15</div>
<div class="t tf" style="left:1491px">M30</div>
<div class="t tf" style="left:1536px">H1</div>
<div class="t tf" style="left:1575px">H4</div>
<div class="t tf" style="left:1614px">D1</div>
<div class="t tf" style="left:1651px">W1</div>
<div class="t tf" style="left:1689px">MN</div>

<!-- Market Watch -->
<div class="t" style="left:4px;top:41px">Market Watch: 09:43:33</div>
<div class="t" style="left:8px;top:70px">Symbol</div>
<div class="t" style="right:1764px;top:70px">Bid</div>
<div class="t" style="right:1708px;top:70px">Ask</div>
<div class="t" style="right:1652px;top:70px">Dail...</div>
<div class="t" style="left:27px;top:95px">XAUUSD</div>
<div class="t bl" style="right:1760.400px;top:95px">4712....</div>
<div class="t bl" style="right:1705.700px;top:95px">4712....</div>
<div class="t bl" style="right:1650px;top:95px">0.09%</div>
<div class="t" style="left:27px;top:119px">EURUSD</div>
<div class="t rd" style="right:1760.400px;top:119px">1.171...</div>
<div class="t rd" style="right:1705.700px;top:119px">1.172...</div>
<div class="t rd" style="right:1650px;top:119px">-0.01%</div>
<div class="t" style="left:27px;top:144px">GBPUSD</div>
<div class="t bl" style="right:1760.400px;top:144px">1.352...</div>
<div class="t bl" style="right:1705.700px;top:144px">1.353...</div>
<div class="t rd" style="right:1650px;top:144px">-0.05%</div>
<div class="t g" style="left:27.500px;top:170px">click to add...</div>
<div class="t g" style="right:1650px;top:170px">3 / 94</div>
<div class="t" style="left:18px;top:295px">Symbols</div>
<div class="t g" style="left:100px;top:295px">Details</div>
<div class="t g" style="left:171px;top:295px">Trading</div>

<!-- Navigator -->
<div class="t" style="left:4px;top:330px">Navigator</div>
<div class="t" style="left:109px;top:358px">QuantumStuff PRO</div>
<div class="t" style="left:57px;top:382px">Expert Advisors</div>
<div class="t" style="left:83px;top:406px">Market</div>
<div class="t" style="left:109px;top:430px">QuantumGrid PRO</div>
<div class="t" style="left:83px;top:454px">Advisors</div>
<div class="t" style="left:83px;top:478px">Examples</div>
<div class="t" style="left:83px;top:502px">Free Robots</div>
<div class="t" style="left:83px;top:526px">QuantumGrid PRO</div>
<div class="t" style="left:109px;top:550px">QuantumGrid PRO</div>
<div class="t" style="left:18px;top:580px">Common</div>
<div class="t g" style="left:105px;top:580px">Favorites</div>

<!-- Chart text -->
<div class="w" style="left:341.500px;top:45px;font-size:11.900px">XAUUSD, M1:&nbsp; Gold vs US Dollar (spot)</div>
<div class="w" style="right:98px;top:45px;font-size:11.900px">QuantumGrid PRO</div>
<div class="t" style="left:337px;top:86px;color:#fff">BUY ON</div>
<div class="t" style="left:333.500px;top:126px;color:#fff">SELL ON</div>
<div class="w" style="left:290px;top:313px">TP</div>
<div class="w" style="left:289px;top:334px">BUY 0.01 at 4713.87</div>
<div class="w" style="left:289px;top:372px">SELL 0.02 at 4712.90</div>
<div class="w" style="left:289px;top:418px">BUY 0.02 at 4711.70</div>
<div class="w" style="left:289px;top:469px">SELL 0.01 at 4710.38</div>
<div class="w" style="left:290px;top:482px">TP</div>
<div class="w" style="left:1855.500px;top:56px">4721.25</div>
<div class="w" style="left:1855.500px;top:89px">4720.40</div>
<div class="w" style="left:1855.500px;top:122px">4719.55</div>
<div class="w" style="left:1855.500px;top:155px">4718.70</div>
<div class="w" style="left:1855.500px;top:188px">4717.85</div>
<div class="w" style="left:1855.500px;top:220px">4717.00</div>
<div class="w" style="left:1855.500px;top:253px">4716.15</div>
<div class="w" style="left:1855.500px;top:286px">4715.30</div>
<div class="w" style="left:1855.500px;top:319px">4714.45</div>
<div class="w" style="left:1855.500px;top:352px">4713.60</div>
<div class="w" style="left:1855.500px;top:385px">4712.75</div>
<div class="w" style="left:1855.500px;top:418px">4711.90</div>
<div class="w" style="left:1855.500px;top:450px">4711.05</div>
<div class="w" style="left:1855.500px;top:483px">4710.20</div>
<div class="w" style="left:1855.500px;top:516px">4709.35</div>
<div class="w" style="left:1857px;top:404px;color:#111">4712.23</div>
<div class="w" style="left:281.500px;top:560px">27 Apr 2026</div>
<div class="w" style="left:409.500px;top:560px">27 Apr 08:15</div>
<div class="w" style="left:537.500px;top:560px">27 Apr 08:23</div>
<div class="w" style="left:665.500px;top:560px">27 Apr 08:31</div>
<div class="w" style="left:793.500px;top:560px">27 Apr 08:39</div>
<div class="w" style="left:921.500px;top:560px">27 Apr 08:47</div>
<div class="w" style="left:1049.500px;top:560px">27 Apr 08:55</div>
<div class="w" style="left:1177.500px;top:560px">27 Apr 09:03</div>
<div class="w" style="left:1305.500px;top:560px">27 Apr 09:11</div>
<div class="w" style="left:1433.500px;top:560px">27 Apr 09:19</div>
<div class="w" style="left:1561.500px;top:560px">27 Apr 09:27</div>
<div class="w" style="left:1689.500px;top:560px">27 Apr 09:35</div>
<div class="w" style="left:1817.500px;top:560px">27 Apr 09:43</div>
<div class="t" style="left:299px;top:584px">XAUUSD,M1</div>
<div class="t g" style="left:412px;top:584px">EURUSD,H1</div>
<div class="t g" style="left:521.500px;top:584px">GBPUSD,H1</div>

<!-- Table header -->
<div class="t" style="left:34.500px;top:616px">Time</div>
<div class="t" style="right:1610px;top:616px">Symbol</div>
<div class="t" style="right:1516px;top:616px">Ticket</div>
<div class="t" style="right:1437.600px;top:616px">Type</div>
<div class="t" style="right:1304.500px;top:616px">Volume</div>
<div class="t" style="right:1172px;top:616px">Price</div>
<div class="t" style="right:1039.200px;top:616px">S / L</div>
<div class="t" style="right:905.700px;top:616px">T / P</div>
<div class="t" style="right:759px;top:616px">Time</div>
<div class="t" style="right:598px;top:616px">Price</div>
<div class="t" style="right:450.600px;top:616px">Profit</div>
<div class="t" style="right:326.500px;top:616px">Change</div>
<div class="t" style="right:28.600px;top:616px">Comment</div>

<!-- Rows -->
<div class="r" style="top:638px"><span class="c1">2026.04.27 09:17:46</span><span class="c2">xauusd</span><span class="c3">1829479046</span><span class="c4">buy</span><span class="c5">0.02</span><span class="c6">4711.91</span><span class="c7">4714.72</span><span class="c8">2026.04.27 09:22:07</span><span class="c9">4714.94</span><span class="c10 bl">6.06</span><span class="c11 bl">0.06 %</span><span class="c12">QuantumGrid PRO</span></div>
<div class="r" style="top:663px"><span class="c1">2026.04.27 08:58:32</span><span class="c2">xauusd</span><span class="c3">1829382141</span><span class="c4">sell</span><span class="c5">0.01</span><span class="c6">4709.87</span><span class="c7">4711.16</span><span class="c8">2026.04.27 09:30:43</span><span class="c9">4711.15</span><span class="c10 rd">-1.28</span><span class="c11 rd">-0.03 %</span><span class="c12">QuantumGrid PRO</span></div>
<div class="r" style="top:688px"><span class="c1">2026.04.27 09:10:46</span><span class="c2">xauusd</span><span class="c3">1829441063</span><span class="c4">sell</span><span class="c5">0.04</span><span class="c6">4714.45</span><span class="c7">4711.16</span><span class="c8">2026.04.27 09:30:43</span><span class="c9">4711.15</span><span class="c10 bl">13.20</span><span class="c11 bl">0.07 %</span><span class="c12">QuantumGrid PRO</span></div>
<div class="r" style="top:713px"><span class="c1">2026.04.27 09:00:33</span><span class="c2">xauusd</span><span class="c3">1829391062</span><span class="c4">sell</span><span class="c5">0.02</span><span class="c6">4712.24</span><span class="c7">4711.16</span><span class="c8">2026.04.27 09:30:43</span><span class="c9">4711.15</span><span class="c10 bl">2.18</span><span class="c11 bl">0.02 %</span><span class="c12">QuantumGrid PRO</span></div>
<div class="r" style="top:738px"><span class="c1">2026.04.27 09:32:28</span><span class="c2">xauusd</span><span class="c3">1829548539</span><span class="c4">sell</span><span class="c5">0.02</span><span class="c6">4712.37</span><span class="c7">4709.68</span><span class="c8">2026.04.27 09:35:01</span><span class="c9">4709.66</span><span class="c10 bl">5.42</span><span class="c11 bl">0.06 %</span><span class="c12">QuantumGrid PRO</span></div>
<div class="r" style="top:763px"><span class="c1">2026.04.27 09:30:59</span><span class="c2">xauusd</span><span class="c3">1829538906</span><span class="c4">sell</span><span class="c5">0.01</span><span class="c6">4710.30</span><span class="c7">4709.68</span><span class="c8">2026.04.27 09:35:01</span><span class="c9">4709.66</span><span class="c10 bl">0.64</span><span class="c11 bl">0.01 %</span><span class="c12">QuantumGrid PRO</span></div>
<div class="r" style="top:788px"><span class="c1">2026.04.27 09:22:18</span><span class="c2">xauusd</span><span class="c3">1829498971</span><span class="c4">buy</span><span class="c5">0.01</span><span class="c6">4715.24</span><span class="c7">4713.91</span><span class="c8">2026.04.27 09:39:11</span><span class="c9">4713.91</span><span class="c10 rd">-1.33</span><span class="c11 rd">-0.03 %</span><span class="c12">QuantumGrid PRO</span></div>
<div class="r" style="top:813px"><span class="c1">2026.04.27 09:28:58</span><span class="c2">xauusd</span><span class="c3">1829523775</span><span class="c4">buy</span><span class="c5">0.02</span><span class="c6">4712.73</span><span class="c7">4713.91</span><span class="c8">2026.04.27 09:39:11</span><span class="c9">4713.91</span><span class="c10 bl">2.36</span><span class="c11 bl">0.03 %</span><span class="c12">QuantumGrid PRO</span></div>
<div class="r" style="top:838px"><span class="c1">2026.04.27 09:30:58</span><span class="c2">xauusd</span><span class="c3">1829538856</span><span class="c4">buy</span><span class="c5">0.04</span><span class="c6">4710.66</span><span class="c7">4713.91</span><span class="c8">2026.04.27 09:39:11</span><span class="c9">4713.91</span><span class="c10 bl">13.00</span><span class="c11 bl">0.07 %</span><span class="c12">QuantumGrid PRO</span></div>

<!-- Summary -->
<div class="t sm" style="left:54px;top:866px">Profit: 4 385.11</div>
<div class="t sm" style="left:172.500px;top:866px">Credit: 0.00</div>
<div class="t sm" style="left:261px;top:866px">Deposit: 0.00</div>
<div class="t sm" style="left:362.500px;top:866px">Withdrawal: 0.00</div>
<div class="t sm" style="left:490px;top:866px">Balance: 4 385.11</div>
<div class="t sm" style="right:450px;top:866px">4 385.11</div>

<!-- Toolbox side & tabs -->
<div class="t" style="left:-14px;top:897px;width:48px;text-align:center;transform:rotate(-90deg)">Toolbox</div>
<div class="t g" style="left:45px;top:909px">Trade</div>
<div class="t g" style="left:108px;top:909px">Exposure</div>
<div class="t" style="left:194px;top:909px">History</div>
<div class="t g" style="left:267px;top:909px">News</div>
<div class="t" style="left:306px;top:914px;font-size:12.500px;font-weight:bold;color:#e0101c">16</div>
<div class="t g" style="left:353px;top:909px">Mailbox</div>
<div class="t" style="left:410.500px;top:914px;font-size:12.500px;font-weight:bold;color:#e0101c">11</div>
<div class="t g" style="left:457px;top:909px">Calendar</div>
<div class="t g" style="left:542px;top:909px">Company</div>
<div class="t g" style="left:631px;top:909px">Alerts</div>
<div class="t g" style="left:695px;top:909px">Articles</div>
<div class="t g" style="left:770px;top:909px">Code Base</div>
<div class="t g" style="left:866px;top:909px">Experts</div>
<div class="t g" style="left:940px;top:909px">Journal</div>
<div class="t" style="left:1640px;top:912px">Market</div>
<div class="t" style="left:1724px;top:912px;color:#c0c0c0">Signals</div>
<div class="t" style="left:1809px;top:912px">VPS</div>
<div class="t" style="left:1872px;top:912px">Tester</div>

<!-- Status bar -->
<div class="t" style="left:2px;top:942px">For Help, press F1</div>
<div class="t" style="left:1055px;top:942px">Default</div>
<div class="t" style="left:1220px;top:942px">2026.04.27 08:50</div>
<div class="t" style="left:1345px;top:942px">O: 4711.43</div>
<div class="t" style="left:1434.500px;top:942px">H: 4711.54</div>
<div class="t" style="left:1523px;top:942px">L: 4709.07</div>
<div class="t" style="left:1608.500px;top:942px">C: 4710.27</div>
<div class="t" style="left:1805px;top:942px">647 / 13 Kb</div>

<!-- Taskbar text -->
<div class="t" style="left:64.500px;top:974px;color:#333">38°C</div>
<div class="t" style="left:64.500px;top:994px;color:#555">Sunny</div>
<div class="t" style="left:677.500px;top:985px;font-size:16px;color:#444">Search</div>
<div class="t" style="left:1623px;width:40px;text-align:center;top:974px;color:#222">ENG</div>
<div class="t" style="left:1623px;width:40px;text-align:center;top:994px;color:#222">IN</div>
<div class="t" style="left:1769px;top:984px;color:#222">99%</div>
<div class="t" style="right:24.500px;top:974px;color:#222">12:13 PM</div>
<div class="t" style="right:24.500px;top:994px;color:#222">27-04-2026</div>
</body></html>
